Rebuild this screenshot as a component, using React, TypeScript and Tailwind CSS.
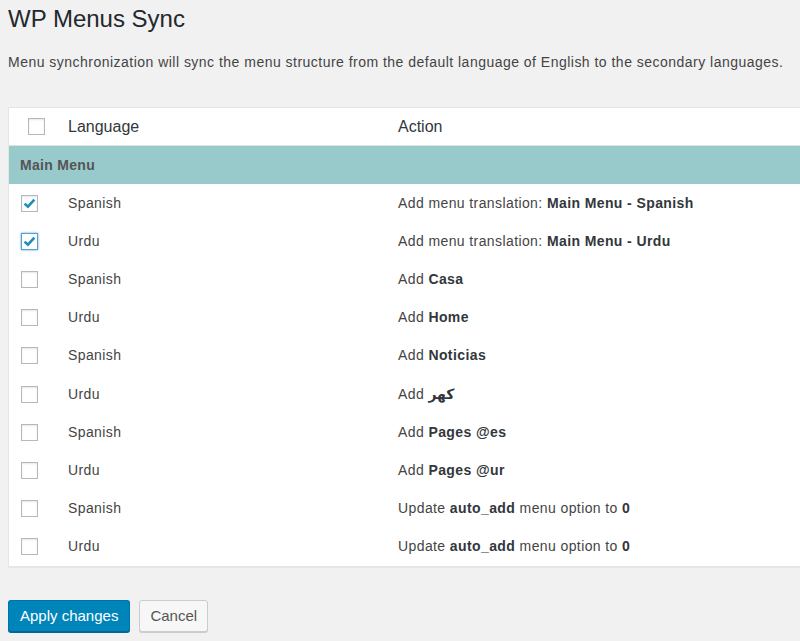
import React from "react";

type Row = { lang: string; checked: boolean; focus?: boolean; action: React.ReactNode };

const B = ({ children }: { children: React.ReactNode }) => (
  <strong className="font-bold text-[#32373c]">{children}</strong>
);

const rows: Row[] = [
  { lang: "Spanish", checked: true, action: <>Add menu translation: <B>Main Menu - Spanish</B></> },
  { lang: "Urdu", checked: true, focus: true, action: <>Add menu translation: <B>Main Menu - Urdu</B></> },
  { lang: "Spanish", checked: false, action: <>Add <B>Casa</B></> },
  { lang: "Urdu", checked: false, action: <>Add <B>Home</B></> },
  { lang: "Spanish", checked: false, action: <>Add <B>Noticias</B></> },
  {
    lang: "Urdu",
    checked: false,
    action: (
      <>
        Add <span className="font-bold text-[#32373c]" style={{ fontFamily: '"DejaVu Sans", sans-serif' }}>کھر</span>
      </>
    ),
  },
  { lang: "Spanish", checked: false, action: <>Add <B>Pages @es</B></> },
  { lang: "Urdu", checked: false, action: <>Add <B>Pages @ur</B></> },
  { lang: "Spanish", checked: false, action: <>Update <B>auto_add</B> menu option to <B>0</B></> },
  { lang: "Urdu", checked: false, action: <>Update <B>auto_add</B> menu option to <B>0</B></> },
];

function Check({ checked, focus }: { checked: boolean; focus?: boolean }) {
  return (
    <span
      className={
        "flex h-[17px] w-[17px] items-center justify-center bg-white border " +
        (focus
          ? "border-[#5b9dd9] shadow-[0_0_2px_rgba(30,140,190,0.8)]"
          : "border-[#b4b9be] shadow-[inset_0_1px_2px_rgba(0,0,0,0.1)]")
      }
    >
      {checked && (
        <svg width="15" height="15" viewBox="0 0 15 15">
          <path d="M2.6 7.6 L5.9 10.7 L12.4 3.6" fill="none" stroke="#1e8cbe" strokeWidth="2.6" strokeLinecap="butt" strokeLinejoin="miter" />
        </svg>
      )}
    </span>
  );
}

export default function App() {
  return (
    <div
      className="min-h-[641px] w-full overflow-hidden bg-[#f1f1f1] text-[#444]"
      style={{ fontFamily: '"Liberation Sans", Arial, sans-serif' }}
    >
      <div className="pl-[8px]">
        <h1 className="pt-[5px] text-[24px] leading-[28px] text-[#23282d]">WP Menus Sync</h1>
        <p className="mt-[19px] whitespace-nowrap text-[14px] leading-[20px] tracking-[0.48px] text-[#444]">
          Menu synchronization will sync the menu structure from the default language of English to the secondary languages.
        </p>
        <div className="mt-[35px] w-[820px] border border-[#e5e5e5] bg-white shadow-[0_1px_1px_rgba(0,0,0,0.04)]">
          <div className="flex h-[38px] items-center border-b border-[#e1e1e1] text-[16px] text-[#32373c]">
            <div className="w-[59px] pl-[19px]">
              <Check checked={false} />
            </div>
            <div className="w-[330px]">Language</div>
            <div>Action</div>
          </div>
          <div className="flex h-[38px] items-center bg-[#99cacb] pl-[11px] text-[14px] font-bold tracking-[0.3px] text-[#555]">
            Main Menu
          </div>
          {rows.map((r, i) => (
            <div key={i} className="flex h-[38.2px] items-center text-[14px] tracking-[0.4px] text-[#444]">
              <div className="w-[59px] pl-[12px]">
                <Check checked={r.checked} focus={r.focus} />
              </div>
              <div className="w-[330px]">{r.lang}</div>
              <div>{r.action}</div>
            </div>
          ))}
        </div>
        <div className="mt-[33px] flex gap-[9px]">
          <button className="h-[32px] rounded-[3px] border border-[#0073aa] border-b-[#006799] bg-[#0085ba] px-[11px] text-[15px] text-white shadow-[0_1px_0_#006799]">
            Apply changes
          </button>
          <button className="h-[32px] rounded-[3px] border border-[#cccccc] bg-[#f7f7f7] px-[10px] text-[15px] text-[#555] shadow-[0_1px_0_#cccccc]">
            Cancel
          </button>
        </div>
      </div>
    </div>
  );
}
